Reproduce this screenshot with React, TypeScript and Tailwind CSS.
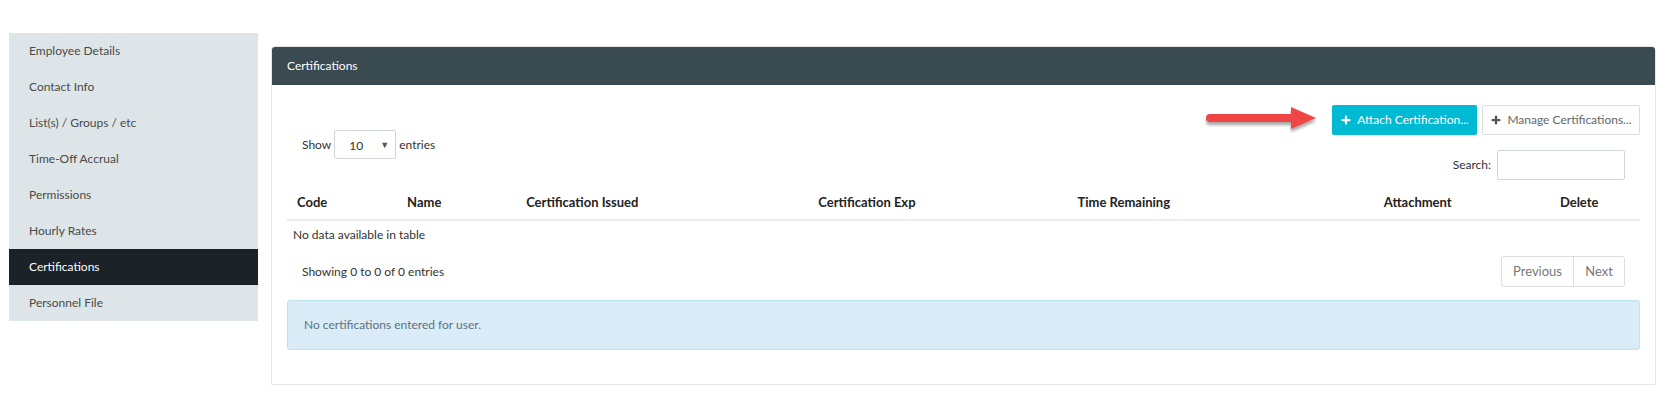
import { Plus } from 'lucide-react';

const menu = [
  'Employee Details',
  'Contact Info',
  'List(s) / Groups / etc',
  'Time-Off Accrual',
  'Permissions',
  'Hourly Rates',
  'Certifications',
  'Personnel File',
];

const columns = [
  { label: 'Code', w: 'w-[110px]' },
  { label: 'Name', w: 'w-[119px]' },
  { label: 'Certification Issued', w: 'w-[292px]' },
  { label: 'Certification Exp', w: 'w-[259px]' },
  { label: 'Time Remaining', w: 'w-[306px]' },
  { label: 'Attachment', w: 'w-[176px]' },
  { label: 'Delete', w: 'w-[90px]' },
];

function Arrow() {
  return (
    <svg width="114" height="30" viewBox="0 0 114 30" className="block">
      <defs>
        <filter id="sh" x="-10%" y="-30%" width="120%" height="180%">
          <feDropShadow dx="0" dy="3" stdDeviation="1.6" floodColor="#000" floodOpacity="0.35" />
        </filter>
      </defs>
      <g filter="url(#sh)">
        <line x1="5" y1="13" x2="92" y2="13" stroke="#f04444" strokeWidth="8" strokeLinecap="round" />
        <polygon points="86,2 111,13 86,24" fill="#f04444" />
      </g>
    </svg>
  );
}

export default function App() {
  return (
    <div className="min-h-[393px] bg-white font-['Lato',sans-serif] text-[12px] text-[#333]">
      <div className="flex items-start pl-[9px] pt-[33px]">
        {/* Sidebar */}
        <div className="w-[249px] bg-[#dde5e8]">
          {menu.map((m) => (
            <div
              key={m}
              className={
                m === 'Certifications'
                  ? 'flex h-[36px] items-center bg-[#1b2228] pl-[20px] text-white'
                  : 'flex h-[36px] items-center pl-[20px] text-[#4a4a4a]'
              }
            >
              {m}
            </div>
          ))}
        </div>

        {/* Panel */}
        <div className="ml-[13px] mt-[13px] w-[1385px] rounded-t-[4px] border border-[#e6e6e6] bg-white pb-[34px]">
          <div className="flex h-[38px] items-center rounded-t-[3px] bg-[#3a4a51] pb-[1px] pl-[15px] text-white">
            Certifications
          </div>

          <div className="px-[15px] pt-[20px]">
            <div className="flex justify-between">
              <div className="flex h-[54px] items-center gap-[3px] pl-[15px] pt-[25px]">
                <span>Show</span>
                <div className="flex h-[29px] w-[62px] items-center justify-between rounded-[2px] border border-[#cfd6da] pl-[14px] pr-[6px]">
                  <span className="mt-[2px]">10</span>
                  <span className="text-[9px] text-[#555]">▼</span>
                </div>
                <span>entries</span>
              </div>

              <div className="flex flex-col items-end">
                <div className="flex items-center">
                  <div className="mr-[13px]">
                    <Arrow />
                  </div>
                  <button className="flex h-[30px] w-[145px] items-center justify-center gap-[5px] rounded-[2px] bg-[#00b9d2] text-[12px] text-white">
                    <Plus className="h-[12px] w-[12px]" strokeWidth={4.5} />
                    Attach Certification...
                  </button>
                  <button className="ml-[5px] flex h-[30px] w-[158px] items-center justify-center gap-[5px] rounded-[2px] border border-[#d9dee1] bg-white text-[12px] text-[#666]">
                    <Plus className="h-[12px] w-[12px] text-[#555]" strokeWidth={4.5} />
                    Manage Certifications...
                  </button>
                </div>
                <div className="mr-[15px] mt-[15px] flex items-center gap-[6px]">
                  <span>Search:</span>
                  <div className="h-[30px] w-[128px] rounded-[2px] border border-[#cfd6da]" />
                </div>
              </div>
            </div>

            {/* Table */}
            <table className="mt-[6px] w-full table-fixed border-collapse">
              <thead>
                <tr className="border-b-2 border-[#e9eef0]">
                  {columns.map((c) => (
                    <th key={c.label} className={`${c.w} h-[34px] pl-[10px] text-left text-[13px] font-bold text-[#222]`}>
                      {c.label}
                    </th>
                  ))}
                </tr>
              </thead>
              <tbody>
                <tr>
                  <td colSpan={7} className="h-[28px] pl-[6px]">
                    No data available in table
                  </td>
                </tr>
              </tbody>
            </table>

            <div className="mt-[8px] flex items-center justify-between">
              <span className="pl-[15px]">Showing 0 to 0 of 0 entries</span>
              <div className="mr-[15px] flex h-[31px] rounded-[3px] border border-[#dddddd] text-[13px] text-[#777]">
                <span className="flex w-[72px] items-center justify-center border-r border-[#dddddd]">Previous</span>
                <span className="flex w-[50px] items-center justify-center">Next</span>
              </div>
            </div>

            <div className="mt-[13px] flex h-[50px] items-center rounded-[3px] border border-[#bfe3ee] bg-[#d9ecf7] pl-[16px] text-[#5b7282]">
              No certifications entered for user.
            </div>
          </div>
        </div>
      </div>
    </div>
  );
}
